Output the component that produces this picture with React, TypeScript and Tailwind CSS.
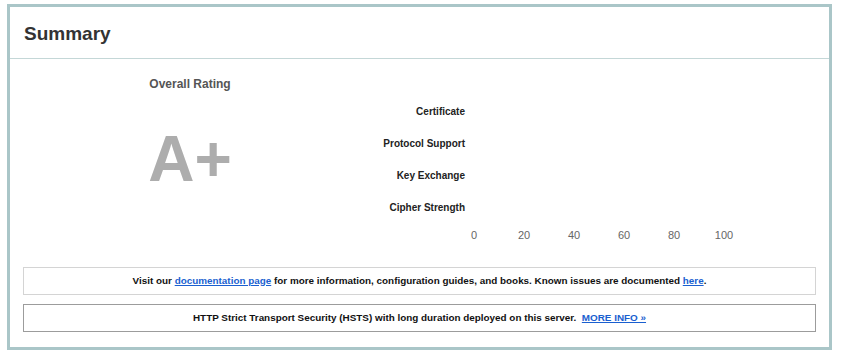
import React from "react"

const labels = ["Certificate", "Protocol Support", "Key Exchange", "Cipher Strength"]
const ticks = ["0", "20", "40", "60", "80", "100"]

export default function App() {
  return (
    <div className="w-[844px] h-[357px] bg-white pt-[4px] pl-[7px] font-['Liberation_Sans',Arial,sans-serif]">
      <div className="w-[825px] h-[346px] border-[3px] border-[#aac6c8] bg-white flex flex-col">
        {/* Header */}
        <div className="h-[52px] shrink-0 border-b border-[#c4d7d7] flex items-center pl-[14px] pt-[3px]">
          <h1 className="text-[19px] font-bold text-[#333]">Summary</h1>
        </div>

        {/* Rating + chart */}
        <div className="h-[198px] flex">
          <div className="w-[360px] flex flex-col items-center pt-[18px]">
            <div className="text-[12px] leading-[14px] font-bold text-[#555]">Overall Rating</div>
            <div className="mt-[36px] text-[64px] leading-[64px] font-bold text-[#adadad]">A+</div>
          </div>
          <div className="flex flex-col pt-[36px]">
            {labels.map((l) => (
              <div key={l} className="h-[32px] flex items-center">
                <div className="w-[95px] text-right text-[10px] font-bold text-[#222]">{l}</div>
              </div>
            ))}
            <div className="mt-[5px] flex pl-[79px]">
              {ticks.map((t) => (
                <div key={t} className="w-[50px] text-center text-[11px] leading-[14px] text-[#666]">
                  {t}
                </div>
              ))}
            </div>
          </div>
        </div>

        {/* Notices */}
        <div className="mx-[13px] mt-[10px] flex flex-col gap-[9px]">
          <div className="h-[28px] border border-[#d4d4d4] flex items-center justify-center text-[9.9px] font-bold text-[#111]">
            <span>
              Visit our{" "}
              <a href="#" className="text-[#1a5fd0] underline">documentation page</a>{" "}
              for more information, configuration guides, and books. Known issues are documented{" "}
              <a href="#" className="text-[#1a5fd0] underline">here</a>.
            </span>
          </div>
          <div className="h-[28px] border border-[#9c9c9c] flex items-center justify-center text-[9.9px] font-bold text-[#111]">
            <span>
              HTTP Strict Transport Security (HSTS) with long duration deployed on this server.{"\u00a0 "}
              <a href="#" className="text-[#1a5fd0] underline">MORE INFO »</a>
            </span>
          </div>
        </div>
      </div>
    </div>
  )
}
